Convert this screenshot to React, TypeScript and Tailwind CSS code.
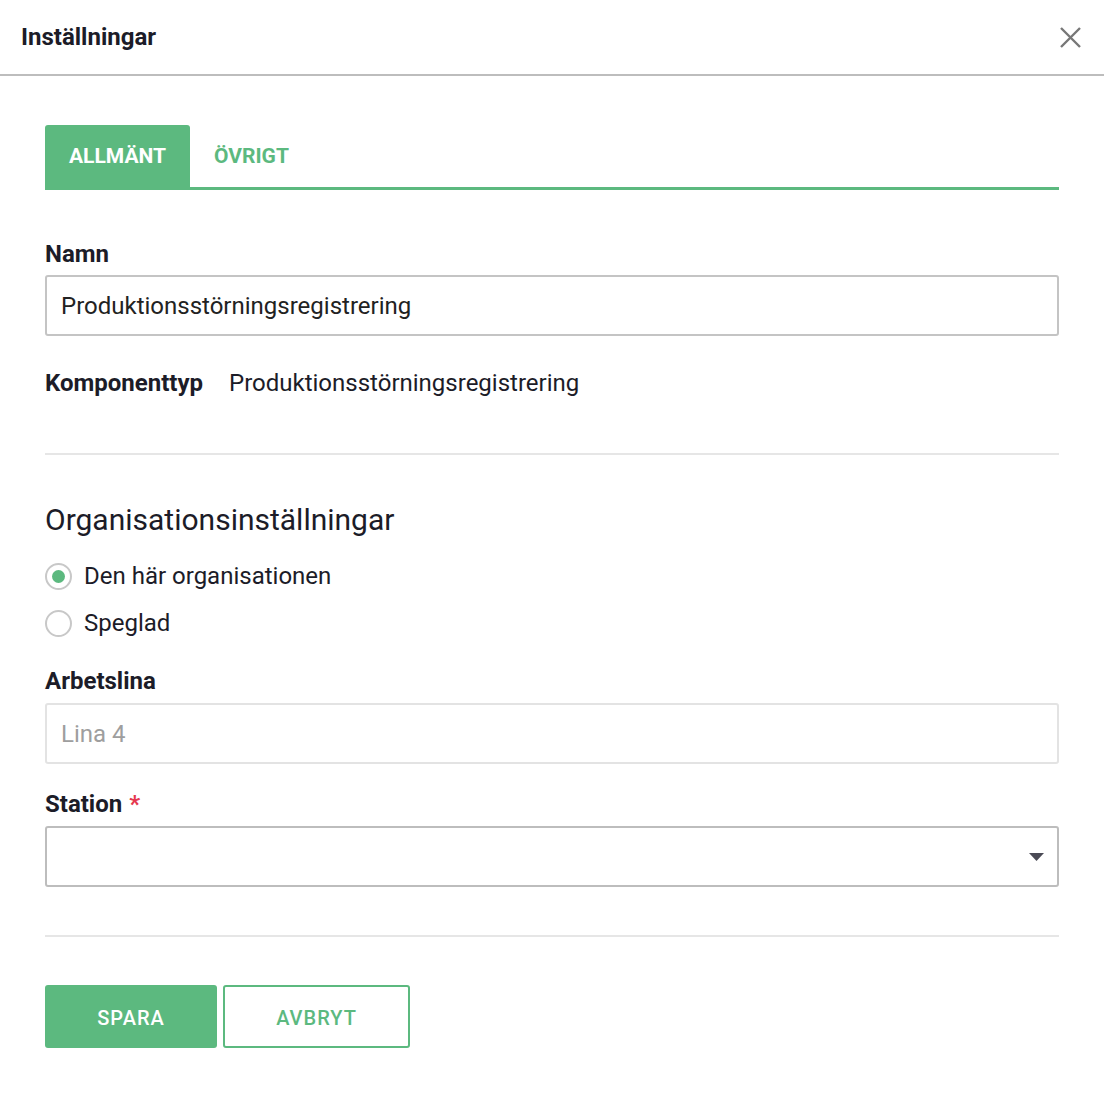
import { useState } from 'react'

const GREEN = 'bg-[#5cb97f]'

function Label({ children, required }: { children: string; required?: boolean }) {
  return (
    <div className="h-[28px] text-[24px] leading-[28px] font-bold text-[#1c1c28]">
      {children}
      {required && <span className="ml-[7px] text-[#e5384f]">*</span>}
    </div>
  )
}

function Radio({ checked, label, onClick }: { checked: boolean; label: string; onClick: () => void }) {
  return (
    <button onClick={onClick} className="flex h-[40px] items-center text-left">
      <span className="flex h-[27px] w-[27px] items-center justify-center rounded-full border-2 border-[#c8c8c8] bg-white">
        {checked && <span className={`h-[13px] w-[13px] rounded-full ${GREEN}`} />}
      </span>
      <span className="ml-[12px] text-[24px] leading-[28px] text-[#1c1c28]">{label}</span>
    </button>
  )
}

export default function App() {
  const [tab, setTab] = useState('allmant')
  const [org, setOrg] = useState('this')

  return (
    <div className="min-h-screen bg-white font-['Roboto','Liberation_Sans',sans-serif] text-[#1c1c28]">
      {/* Header */}
      <header className="flex h-[76px] items-center justify-between border-b-2 border-[#bdbdbd] pl-[21px] pr-[22px]">
        <h1 className="text-[24px] font-bold leading-[28px] text-[#1c1c28]">Inställningar</h1>
        <button aria-label="Stäng" className="flex h-[24px] w-[24px] items-center justify-center">
          <svg width="21" height="21" viewBox="0 0 21 21" fill="none" stroke="#777777" strokeWidth="2.4">
            <path d="M1 1 L20 20 M20 1 L1 20" />
          </svg>
        </button>
      </header>

      <div className="px-[45px] pt-[49px]">
        {/* Tabs */}
        <nav className="flex border-b-[3px] border-[#5cb97f]">
          <button
            onClick={() => setTab('allmant')}
            className={`h-[62px] rounded-t-[3px] px-[24px] pt-[2px] text-[21px] font-bold uppercase ${
              tab === 'allmant' ? 'bg-[#5cb97f] text-white' : 'text-[#5cb97f]'
            }`}
          >
            Allmänt
          </button>
          <button
            onClick={() => setTab('ovrigt')}
            className={`h-[62px] rounded-t-[3px] px-[24px] pt-[2px] text-[21px] font-bold uppercase ${
              tab === 'ovrigt' ? 'bg-[#5cb97f] text-white' : 'text-[#5cb97f]'
            }`}
          >
            Övrigt
          </button>
        </nav>

        {/* Namn */}
        <div className="mt-[50px]">
          <Label>Namn</Label>
          <input
            defaultValue="Produktionsstörningsregistrering"
            className="mt-[7px] block h-[61px] w-full rounded-[3px] border-2 border-[#c4c4c4] px-[14px] text-[24px] text-[#222222] outline-none"
          />
        </div>

        <div className="mt-[33px] flex h-[28px] items-center text-[24px] leading-[28px]">
          <span className="font-bold">Komponenttyp</span>
          <span className="ml-[26px]">Produktionsstörningsregistrering</span>
        </div>

        <hr className="mt-[56px] border-t-2 border-[#e6e6e6]" />

        <h2 className="mt-[47px] text-[30px] leading-[36px] font-normal">Organisationsinställningar</h2>

        <div className="mt-[18px] flex flex-col gap-[7px]">
          <Radio checked={org === 'this'} label="Den här organisationen" onClick={() => setOrg('this')} />
          <Radio checked={org === 'mirror'} label="Speglad" onClick={() => setOrg('mirror')} />
        </div>

        {/* Arbetslina */}
        <div className="mt-[24px]">
          <Label>Arbetslina</Label>
          <input
            disabled
            defaultValue="Lina 4"
            className="mt-[8px] block h-[61px] w-full rounded-[3px] border-2 border-[#e3e3e3] bg-white px-[14px] text-[24px] text-[#9e9e9e] outline-none"
          />
        </div>

        {/* Station */}
        <div className="mt-[26px]">
          <Label required>Station</Label>
          <div className="mt-[8px] flex h-[61px] w-full items-center justify-end rounded-[3px] border-2 border-[#bdbdbd] pr-[13px]">
            <svg width="15" height="8" viewBox="0 0 15 8">
              <path d="M0 0 H15 L7.5 8 Z" fill="#4a4a55" />
            </svg>
          </div>
        </div>

        <hr className="mt-[48px] border-t-2 border-[#e6e6e6]" />

        {/* Actions */}
        <div className="mt-[48px] flex gap-[6px] pb-[45px]">
          <button className="h-[63px] w-[172px] rounded-[3px] bg-[#5cb97f] pt-[2px] text-[20px] font-medium uppercase tracking-[1px] text-white">
            Spara
          </button>
          <button className="h-[63px] w-[187px] rounded-[3px] border-2 border-[#5cb97f] bg-white pt-[2px] text-[20px] font-medium uppercase tracking-[1px] text-[#5cb97f]">
            Avbryt
          </button>
        </div>
      </div>
    </div>
  )
}
